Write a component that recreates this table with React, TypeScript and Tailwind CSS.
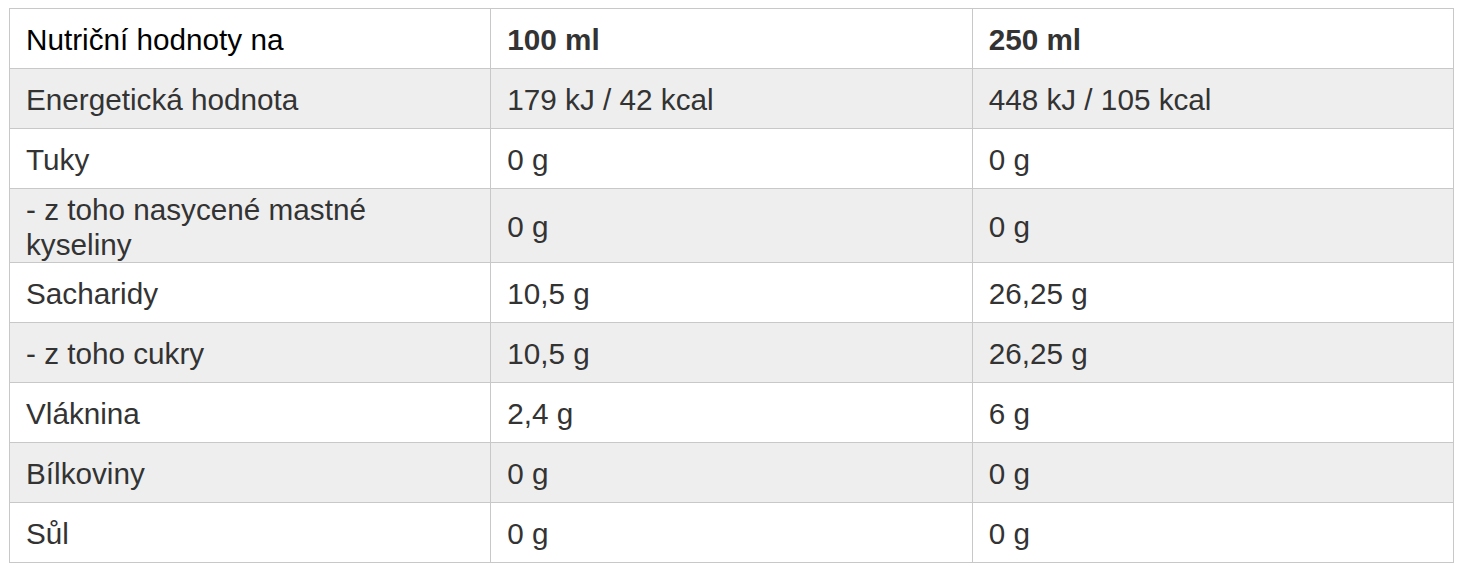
import React from "react";

const rows: [string, string, string][] = [
  ["Energetická hodnota", "179 kJ / 42 kcal", "448 kJ / 105 kcal"],
  ["Tuky", "0 g", "0 g"],
  ["- z toho nasycené mastné kyseliny", "0 g", "0 g"],
  ["Sacharidy", "10,5 g", "26,25 g"],
  ["- z toho cukry", "10,5 g", "26,25 g"],
  ["Vláknina", "2,4 g", "6 g"],
  ["Bílkoviny", "0 g", "0 g"],
  ["Sůl", "0 g", "0 g"],
];

export default function App() {
  return (
    <div className="bg-white w-[1464px] h-[572px] pt-[8px] pl-[9px]" style={{ fontFamily: '"Liberation Sans", Arial, sans-serif' }}>
      <table className="w-[1445px] table-fixed border-collapse border border-[#c8c8c8] text-[29.7px] leading-[34.5px] text-[#333]">
        <tbody>
          <tr className="bg-white">
            <td className="w-1/3 h-[60px] border border-[#c8c8c8] px-[16px] pt-[4px] pb-0 align-middle text-black">Nutriční hodnoty na</td>
            <td className="w-1/3 h-[60px] border border-[#c8c8c8] px-[16px] pt-[4px] pb-0 align-middle font-bold">100 ml</td>
            <td className="w-1/3 h-[60px] border border-[#c8c8c8] px-[16px] pt-[4px] pb-0 align-middle font-bold">250 ml</td>
          </tr>
          {rows.map((r, i) => (
            <tr key={i} className={i % 2 === 0 ? "bg-[#eeeeee]" : "bg-white"}>
              <td className="h-[60px] border border-[#c8c8c8] px-[16px] pt-[4px] pb-0 align-middle">{r[0]}</td>
              <td className="h-[60px] border border-[#c8c8c8] px-[16px] pt-[4px] pb-0 align-middle">{r[1]}</td>
              <td className="h-[60px] border border-[#c8c8c8] px-[16px] pt-[4px] pb-0 align-middle">{r[2]}</td>
            </tr>
          ))}
        </tbody>
      </table>
    </div>
  );
}
